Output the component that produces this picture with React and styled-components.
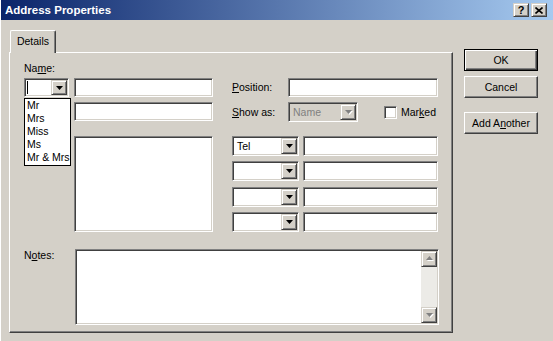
import React from "react";
import styled, { createGlobalStyle, css } from "styled-components";

const GlobalStyle = createGlobalStyle`
  html, body {
    margin: 0;
    padding: 0;
  }
  body {
    background: #d4d0c8;
    font-family: "Liberation Sans", Arial, sans-serif;
    font-size: 10.5px;
    color: #000;
  }
`;

const raised = css`
  background: #d4d0c8;
  border: 1px solid;
  border-color: #ffffff #404040 #404040 #ffffff;
  box-shadow: inset -1px -1px 0 #808080, inset 1px 1px 0 #d4d0c8;
`;

const raisedSmall = css`
  background: #d4d0c8;
  border: 1px solid;
  border-color: #d4d0c8 #404040 #404040 #d4d0c8;
  box-shadow: inset 1px 1px 0 #ffffff, inset -1px -1px 0 #808080;
`;

const sunken = css`
  border: 1px solid;
  border-color: #808080 #ffffff #ffffff #808080;
  box-shadow: inset 1px 1px 0 #404040, inset -1px -1px 0 #d4d0c8;
`;

const Window = styled.div`
  width: 553px;
  height: 341px;
  background: #d4d0c8;
  display: flex;
  flex-direction: column;
  overflow: hidden;
  box-sizing: border-box;
  border-left: 1px solid #ffffff;
`;

const TitleBar = styled.div`
  height: 20px;
  flex: none;
  display: flex;
  align-items: center;
  padding: 0 6px 0 4px;
  background: linear-gradient(to right, #0a246a, #a6caf0);
  color: #ffffff;
  font-weight: bold;
  font-size: 11.5px;
`;

const TitleText = styled.span`
  flex: 1;
`;

const CaptionButton = styled.div`
  ${raisedSmall};
  box-sizing: border-box;
  width: 16px;
  height: 14px;
  margin-left: ${(p) => (p.$gap ? "2px" : "0")};
  display: flex;
  align-items: center;
  justify-content: center;
  color: #000;
  font-size: 11px;
  font-weight: bold;
  line-height: 1;
`;

const Body = styled.div`
  flex: 1;
  display: flex;
  gap: 11px;
  padding: 10px 0 0 8px;
`;

const TabControl = styled.div`
  width: 444px;
  display: flex;
  flex-direction: column;
`;

const TabStrip = styled.div`
  display: flex;
  height: 22px;
  padding-left: 1px;
`;

const Tab = styled.div`
  position: relative;
  z-index: 1;
  width: 46px;
  height: 23px;
  box-sizing: border-box;
  background: #d4d0c8;
  border-top: 1px solid #ffffff;
  border-left: 1px solid #ffffff;
  border-right: 1px solid #404040;
  box-shadow: inset -1px 0 0 #808080;
  border-radius: 2px 2px 0 0;
  display: flex;
  justify-content: center;
  padding-top: 4px;
`;

const Panel = styled.div`
  height: 281px;
  box-sizing: border-box;
  ${raised};
  box-shadow: inset -1px -1px 0 #808080;
  padding: 9px 0 0 14px;
  display: flex;
  flex-direction: column;
`;

const Label = styled.div`
  height: 13px;
  line-height: 13px;
  white-space: nowrap;
  width: ${(p) => (p.$w ? `${p.$w}px` : "auto")};
  flex: none;
`;

const TopSection = styled.div`
  display: flex;
  gap: 19px;
  margin-top: 3px;
`;

const Column = styled.div`
  width: ${(p) => p.$w}px;
  display: flex;
  flex-direction: column;
`;

const Row = styled.div`
  display: flex;
  align-items: center;
  gap: ${(p) => p.$gap ?? 0}px;
  margin-top: ${(p) => p.$mt ?? 0}px;
  padding-left: ${(p) => p.$indent ?? 0}px;
`;

const Field = styled.div`
  ${sunken};
  box-sizing: border-box;
  background: #ffffff;
  width: ${(p) => p.$w}px;
  height: ${(p) => p.$h ?? 19}px;
  flex: none;
`;

const ComboBox = styled.div`
  ${sunken};
  position: relative;
  box-sizing: border-box;
  width: ${(p) => p.$w}px;
  height: ${(p) => p.$h ?? 19}px;
  background: ${(p) => (p.$disabled ? "#d4d0c8" : "#ffffff")};
  color: ${(p) => (p.$disabled ? "#808080" : "#000")};
  padding: 1px;
  display: flex;
  align-items: center;
  flex: none;
`;

const ComboValue = styled.span`
  flex: 1;
  padding-left: 3px;
  line-height: 13px;
  white-space: nowrap;
`;

const Caret = styled.span`
  display: block;
  width: 1px;
  height: 13px;
  margin-left: 1px;
  background: #000;
  flex: none;
`;

const ArrowButton = styled.div`
  ${raisedSmall};
  box-sizing: border-box;
  width: 16px;
  height: 100%;
  flex: none;
  display: flex;
  align-items: center;
  justify-content: center;
`;

const DropList = styled.div`
  position: absolute;
  top: 19px;
  left: -1px;
  width: 47px;
  box-sizing: border-box;
  border: 1px solid #000;
  background: #ffffff;
  color: #000;
  z-index: 2;
  padding-bottom: 1px;
`;

const DropItem = styled.div`
  height: 13px;
  line-height: 13px;
  padding-left: 2px;
  white-space: nowrap;
`;

const CheckBox = styled.div`
  ${sunken};
  box-sizing: border-box;
  width: 13px;
  height: 13px;
  background: #ffffff;
  margin-left: 26px;
  flex: none;
`;

const PhoneList = styled.div`
  display: grid;
  grid-template-columns: 67px 135px;
  grid-auto-rows: 20px;
  column-gap: 4px;
  row-gap: 5.3px;
  margin-top: 14px;
`;

const NotesRow = styled.div`
  display: flex;
  align-items: flex-start;
  margin-top: 17px;
`;

const NotesBox = styled.div`
  ${sunken};
  box-sizing: border-box;
  width: 364px;
  height: 76px;
  background: #ffffff;
  padding: 1px;
  display: flex;
  justify-content: flex-end;
`;

const ScrollBar = styled.div`
  width: 16px;
  display: flex;
  flex-direction: column;
  background: #ecebe7;
`;

const ScrollButton = styled.div`
  ${raisedSmall};
  box-sizing: border-box;
  width: 16px;
  height: 16px;
  display: flex;
  align-items: center;
  justify-content: center;
`;

const Track = styled.div`
  flex: 1;
`;

const ButtonColumn = styled.div`
  display: flex;
  flex-direction: column;
  padding-top: 19px;
`;

const PushButton = styled.div`
  ${raised};
  box-sizing: border-box;
  width: 74px;
  height: 22px;
  margin-top: ${(p) => p.$mt ?? 0}px;
  display: flex;
  align-items: center;
  justify-content: center;
  ${(p) =>
    p.$default &&
    css`
      border: 1px solid #000;
      box-shadow: inset 1px 1px 0 #ffffff, inset -1px -1px 0 #404040,
        inset -2px -2px 0 #808080;
    `}
`;

const Arrow = ({ dir = "down", disabled }) => (
  <svg width="9" height="6" viewBox="0 0 9 6">
    {disabled && (
      <path
        d={dir === "down" ? "M2 2h7l-3.5 4z" : "M2 5h7l-3.5-4z"}
        fill="#ffffff"
      />
    )}
    <path
      d={dir === "down" ? "M1 1h7l-3.5 4z" : "M1 4h7l-3.5-4z"}
      fill={disabled ? "#808080" : "#000"}
    />
  </svg>
);

const Combo = ({ w, h, value, disabled, caret, children }) => (
  <ComboBox $w={w} $h={h} $disabled={disabled}>
    {caret && <Caret />}
    <ComboValue>{value}</ComboValue>
    <ArrowButton>
      <Arrow disabled={disabled} />
    </ArrowButton>
    {children}
  </ComboBox>
);

const Key = ({ children }) => <u>{children}</u>;

export default function App() {
  return (
    <>
      <GlobalStyle />
      <Window>
        <TitleBar>
          <TitleText>Address Properties</TitleText>
          <CaptionButton>?</CaptionButton>
          <CaptionButton $gap>
            <svg width="8" height="7" viewBox="0 0 8 7">
              <path
                d="M0.5 0.5L7.5 6.5M7.5 0.5L0.5 6.5"
                stroke="#000"
                strokeWidth="1.6"
              />
            </svg>
          </CaptionButton>
        </TitleBar>
        <Body>
          <TabControl>
            <TabStrip>
              <Tab>Details</Tab>
            </TabStrip>
            <Panel>
              <Label>
                Na<Key>m</Key>e:
              </Label>
              <TopSection>
                <Column $w={189}>
                  <Row $gap={5}>
                    <Combo w={45} caret>
                      <DropList>
                        <DropItem>Mr</DropItem>
                        <DropItem>Mrs</DropItem>
                        <DropItem>Miss</DropItem>
                        <DropItem>Ms</DropItem>
                        <DropItem>Mr &amp; Mrs</DropItem>
                      </DropList>
                    </Combo>
                    <Field $w={139} />
                  </Row>
                  <Row $mt={5} $indent={50}>
                    <Field $w={139} />
                  </Row>
                  <Row $mt={15} $indent={50}>
                    <Field $w={139} $h={96} />
                  </Row>
                </Column>
                <Column $w={206}>
                  <Row>
                    <Label $w={56}>
                      <Key>P</Key>osition:
                    </Label>
                    <Field $w={150} />
                  </Row>
                  <Row $mt={5}>
                    <Label $w={56}>
                      <Key>S</Key>how as:
                    </Label>
                    <Combo w={70} h={20} value="Name" disabled />
                    <CheckBox />
                    <Label style={{ marginLeft: 4 }}>
                      Mar<Key>k</Key>ed
                    </Label>
                  </Row>
                  <PhoneList>
                    <Combo w={67} h={20} value="Tel" />
                    <Field $w={135} $h={20} />
                    <Combo w={67} h={20} />
                    <Field $w={135} $h={20} />
                    <Combo w={67} h={20} />
                    <Field $w={135} $h={20} />
                    <Combo w={67} h={20} />
                    <Field $w={135} $h={20} />
                  </PhoneList>
                </Column>
              </TopSection>
              <NotesRow>
                <Label $w={51}>
                  N<Key>o</Key>tes:
                </Label>
                <NotesBox>
                  <ScrollBar>
                    <ScrollButton>
                      <Arrow dir="up" disabled />
                    </ScrollButton>
                    <Track />
                    <ScrollButton>
                      <Arrow dir="down" disabled />
                    </ScrollButton>
                  </ScrollBar>
                </NotesBox>
              </NotesRow>
            </Panel>
          </TabControl>
          <ButtonColumn>
            <PushButton $default>OK</PushButton>
            <PushButton $mt={5}>Cancel</PushButton>
            <PushButton $mt={14}>
              Add A<Key>n</Key>other
            </PushButton>
          </ButtonColumn>
        </Body>
      </Window>
    </>
  );
}
